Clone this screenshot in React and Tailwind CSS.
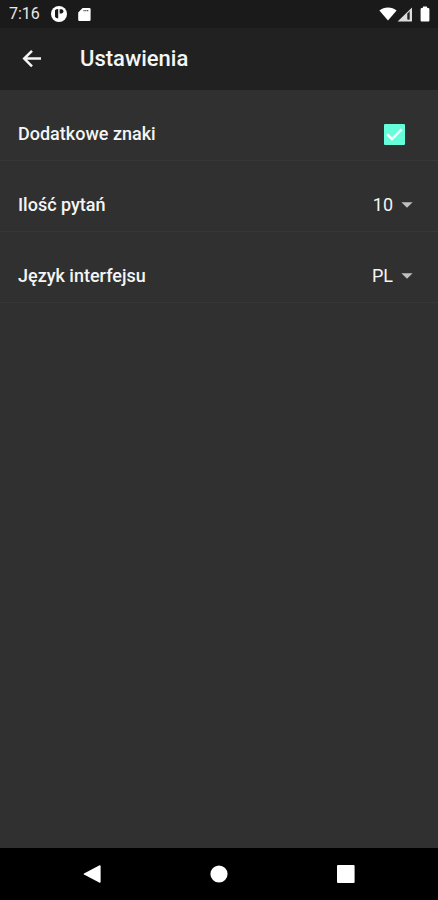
import React, { useState } from 'react';

const StatusBar = () => (
  <div className="flex items-center justify-between h-7 pl-[9px] pr-2 bg-[#1a1a1a] text-white">
    <div className="flex items-center">
      <span className="w-[42px] text-base leading-5 text-[#e8e8e8]">7:16</span>
      <svg viewBox="0 0 16 16" className="w-4 h-4 mr-[11px]" aria-hidden="true">
        <circle cx="8" cy="8" r="8" fill="#fff" />
        <path d="M4 4.2Q5.2 3 7.2 3V12.6Q5 12.4 4 10.8Z" fill="#1a1a1a" />
        <path d="M8.6 3.2H10.6Q12.4 3.4 12.4 5.2T10.6 7.4H8.6Z" fill="#1a1a1a" />
      </svg>
      <svg viewBox="0 0 13 15" className="w-[13px] h-[15px]" aria-hidden="true">
        <path d="M4.6 1H11.4Q12.6 1 12.6 2.2V12.8Q12.6 14 11.4 14H1.4Q.2 14 .2 12.8V5.4Z" fill="#fff" />
        <path d="M5.4 3.6H10.4" stroke="#555" strokeWidth="1.4" strokeDasharray="1.3 .5" />
      </svg>
    </div>
    <div className="flex items-center">
      <svg viewBox="0 0 18 14" className="w-[18px] h-[14px]" aria-hidden="true">
        <path d="M9 13.6L.4 3.6C5 -.4 13 -.4 17.6 3.6Z" fill="#fff" />
      </svg>
      <svg viewBox="0 0 15 15" className="w-[15px] h-[15px] mr-2" aria-hidden="true">
        <path d="M15 .4V14.4H.6Z" fill="#dcdcdc" />
        <path d="M10 6.8L12.8 4V12.4H10Z" fill="#555" />
        <path d="M11.6 6V12.4" stroke="#222" strokeWidth="1.2" />
      </svg>
      <svg viewBox="0 0 10 16" className="w-[10px] h-4" aria-hidden="true">
        <path d="M3.2 .6H6.8L7.4 2H8.2Q9.4 2 9.4 3.2V14.4Q9.4 15.4 8.4 15.4H1.6Q.6 15.4 .6 14.4V3.2Q.6 2 1.8 2H2.6Z" fill="#fff" />
      </svg>
    </div>
  </div>
);

const Header = () => (
  <header className="flex items-center h-[62px] pl-5 bg-[#212121] text-[#f5f5f5]">
    <button type="button" aria-label="Wstecz" className="w-6 h-6 mr-9">
      <svg viewBox="0 0 24 24" className="w-6 h-6" fill="none" stroke="currentColor" strokeWidth="2.5">
        <path d="M21 11.6H4.8M12 3.8L4.2 11.6L12 19.4" />
      </svg>
    </button>
    <h1 className="text-[22px] leading-7 font-medium">Ustawienia</h1>
  </header>
);

const SettingRow = ({ id, label, children }) => (
  <div className="flex items-center justify-between h-[71px] pt-[18px] pl-[18px] pr-[25px] border-b border-[#373737]">
    <label htmlFor={id} className="text-lg leading-6 font-medium">{label}</label>
    {children}
  </div>
);

const Dropdown = ({ id, value, options, onChange }) => (
  <div className="relative flex items-center">
    <select
      id={id}
      value={value}
      onChange={(e) => onChange(e.target.value)}
      className="appearance-none field-sizing-content pr-5 text-lg leading-6 bg-transparent outline-none"
    >
      {options.map((option) => (
        <option key={option} value={option} className="bg-[#424242]">{option}</option>
      ))}
    </select>
    <svg viewBox="0 0 12 6" className="absolute right-0 w-3 h-[6px] pointer-events-none" aria-hidden="true">
      <path d="M.4 .2H11.6L6 5.8Z" fill="#c0c0c0" />
    </svg>
  </div>
);

const NavigationBar = () => (
  <nav className="grid grid-cols-3 items-center justify-items-center h-[52px] px-7 bg-black text-white">
    <button type="button" aria-label="Wróć">
      <svg viewBox="0 0 18 18" className="w-[18px] h-[18px]" fill="currentColor">
        <path d="M16.6 .3Q17.6 0 17.6 1V17Q17.6 18 16.6 17.7L1 9.6Q0 9 1 8.4Z" />
      </svg>
    </button>
    <button type="button" aria-label="Ekran główny">
      <svg viewBox="0 0 18 18" className="w-[18px] h-[18px]" fill="currentColor">
        <circle cx="9" cy="9" r="8.6" />
      </svg>
    </button>
    <button type="button" aria-label="Ostatnie aplikacje">
      <svg viewBox="0 0 18 18" className="w-[18px] h-[18px]" fill="currentColor">
        <rect width="17.6" height="18" rx="1" />
      </svg>
    </button>
  </nav>
);

const App = () => {
  const [extraSigns, setExtraSigns] = useState(true);
  const [questionCount, setQuestionCount] = useState('10');
  const [language, setLanguage] = useState('PL');

  return (
    <div className="flex flex-col min-h-screen bg-[#303030] text-[#f5f5f5] font-['Roboto',sans-serif]">
      <StatusBar />
      <Header />

      <main className="flex-1">
        <SettingRow id="extra-signs" label="Dodatkowe znaki">
          <div className="relative w-[21px] h-[21px] mr-2">
            <input
              id="extra-signs"
              type="checkbox"
              checked={extraSigns}
              onChange={(e) => setExtraSigns(e.target.checked)}
              className="block appearance-none w-[21px] h-[21px] rounded-[1px] border-2 border-[#b8b8b8] checked:border-[#64ffda] checked:bg-[#64ffda]"
            />
            {extraSigns && (
              <svg viewBox="0 0 21 21" className="absolute inset-0 pointer-events-none" fill="none" stroke="#fff" strokeWidth="2.4" aria-hidden="true">
                <path d="M3.2 10.4L8 15L17.6 5.4" />
              </svg>
            )}
          </div>
        </SettingRow>

        <SettingRow id="question-count" label="Ilość pytań">
          <Dropdown
            id="question-count"
            value={questionCount}
            options={['10', '20', '30']}
            onChange={setQuestionCount}
          />
        </SettingRow>

        <SettingRow id="language" label="Język interfejsu">
          <Dropdown
            id="language"
            value={language}
            options={['PL', 'EN']}
            onChange={setLanguage}
          />
        </SettingRow>
      </main>

      <NavigationBar />
    </div>
  );
};

export default App;
